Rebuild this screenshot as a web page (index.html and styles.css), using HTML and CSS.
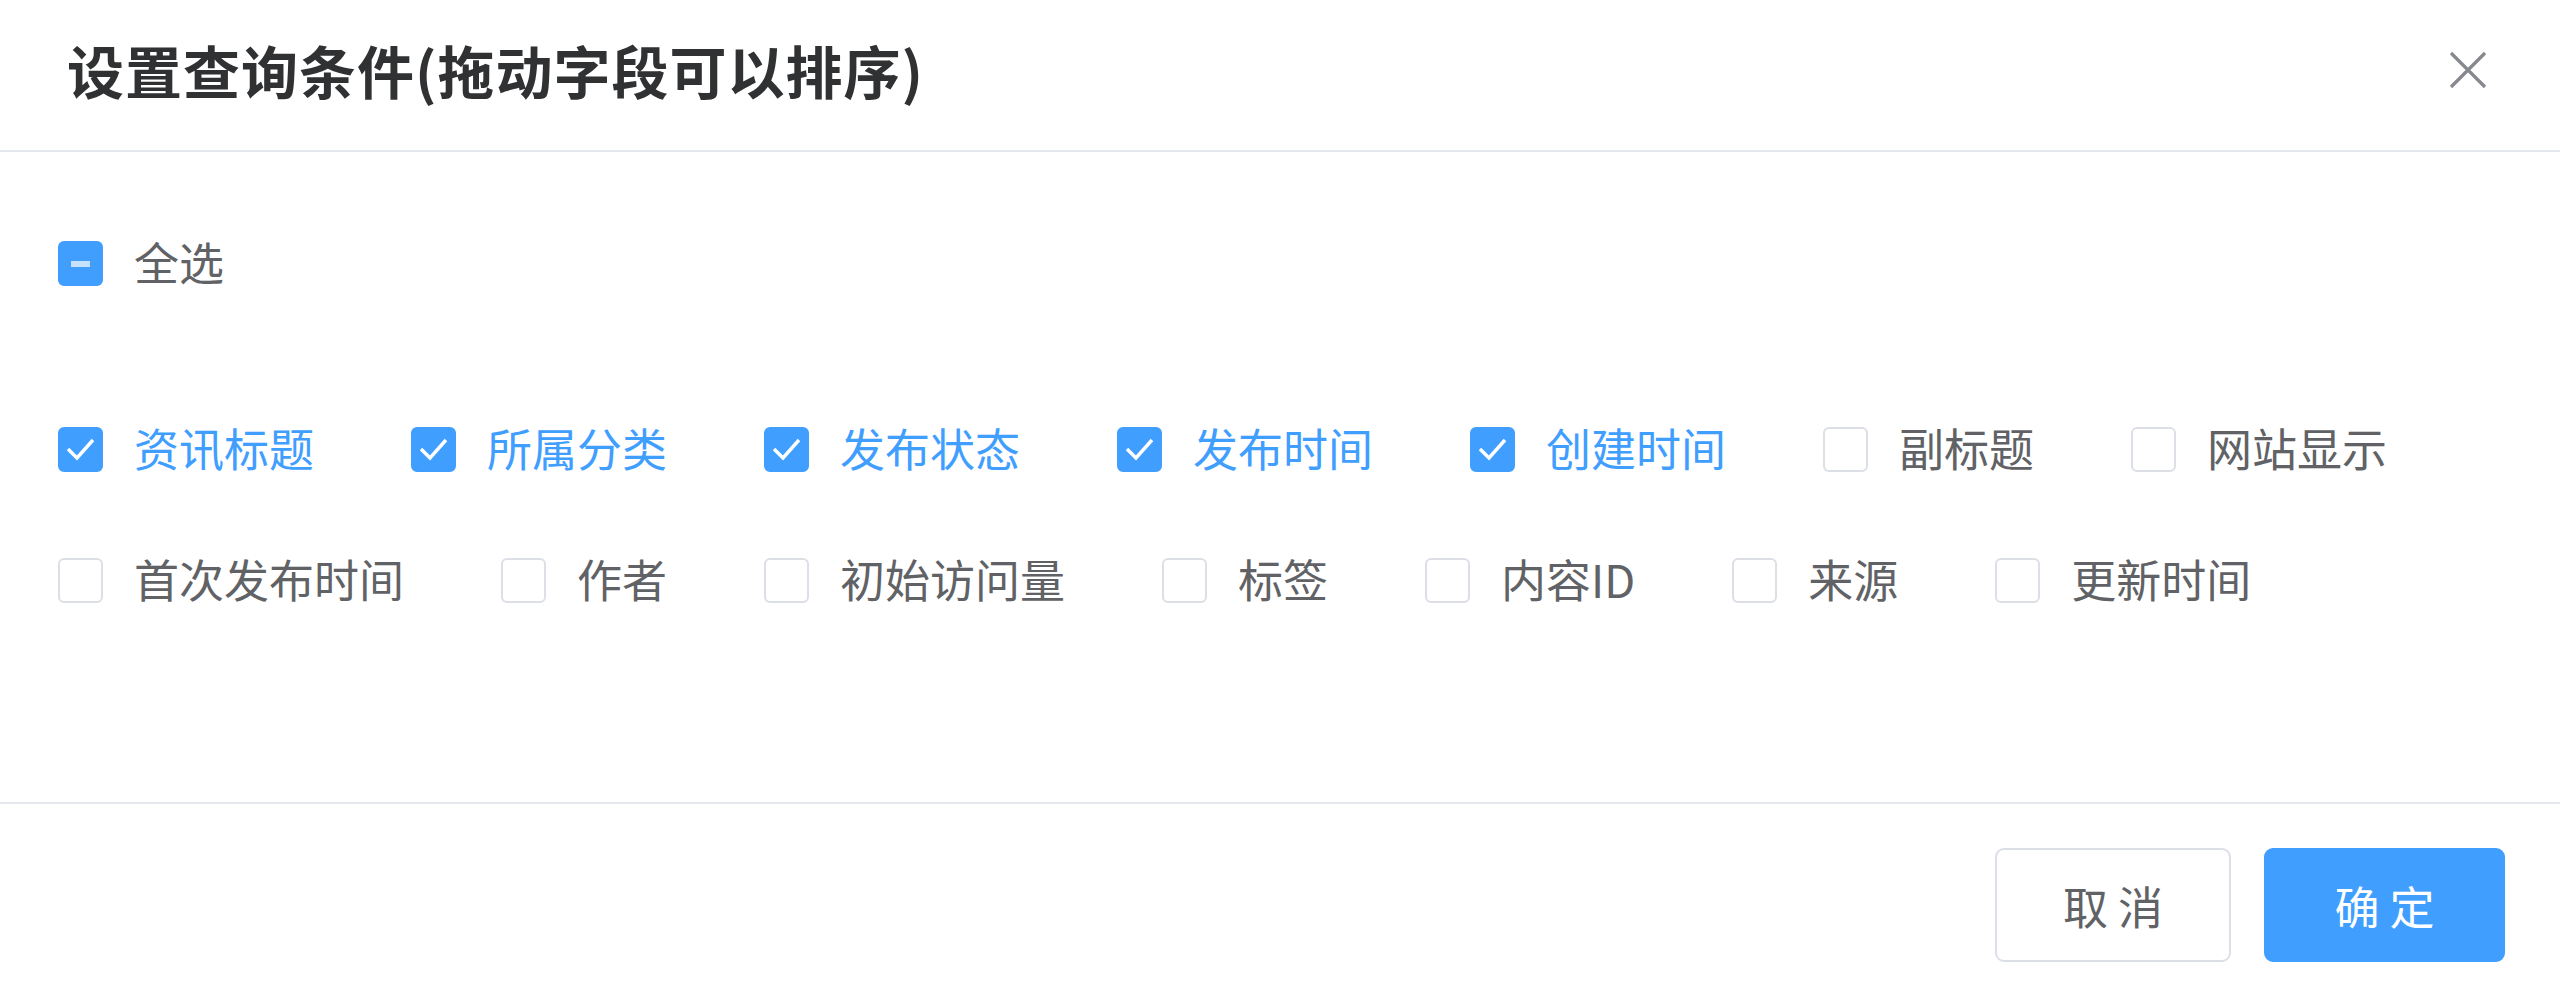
FILE: index.html
```html
<!DOCTYPE html>
<html lang="zh-CN">
<head>
    <meta charset="UTF-8">
    <meta name="viewport" content="width=device-width, initial-scale=1.0">
    <title>设置查询条件</title>
    <link rel="stylesheet" href="styles.css">
</head>
<body>
    <div class="dialog">
        <div class="dialog-header">
            <span class="dialog-title">设置查询条件(拖动字段可以排序)</span>
            <button class="dialog-close" type="button" aria-label="关闭">
                <svg width="38" height="38" viewBox="0 0 38 38"><path d="M2 2 L36 36 M36 2 L2 36" stroke="#85888f" stroke-width="3.2" fill="none"/></svg>
            </button>
        </div>
        <div class="dialog-body">
            <div class="check-all">
                <label class="checkbox">
                    <span class="box checked"><span class="dash"></span></span>
                    <span class="text">全选</span>
                </label>
            </div>
            <div class="check-group">
                <label class="checkbox is-checked">
                    <span class="box checked"><svg width="45" height="45" viewBox="0 0 45 45"><polyline points="10,22 19,31 35,13" stroke="#fff" stroke-width="3.4" fill="none"/></svg></span>
                    <span class="text">资讯标题</span>
                </label>
                <label class="checkbox is-checked">
                    <span class="box checked"><svg width="45" height="45" viewBox="0 0 45 45"><polyline points="10,22 19,31 35,13" stroke="#fff" stroke-width="3.4" fill="none"/></svg></span>
                    <span class="text">所属分类</span>
                </label>
                <label class="checkbox is-checked">
                    <span class="box checked"><svg width="45" height="45" viewBox="0 0 45 45"><polyline points="10,22 19,31 35,13" stroke="#fff" stroke-width="3.4" fill="none"/></svg></span>
                    <span class="text">发布状态</span>
                </label>
                <label class="checkbox is-checked">
                    <span class="box checked"><svg width="45" height="45" viewBox="0 0 45 45"><polyline points="10,22 19,31 35,13" stroke="#fff" stroke-width="3.4" fill="none"/></svg></span>
                    <span class="text">发布时间</span>
                </label>
                <label class="checkbox is-checked">
                    <span class="box checked"><svg width="45" height="45" viewBox="0 0 45 45"><polyline points="10,22 19,31 35,13" stroke="#fff" stroke-width="3.4" fill="none"/></svg></span>
                    <span class="text">创建时间</span>
                </label>
                <label class="checkbox">
                    <span class="box"></span>
                    <span class="text">副标题</span>
                </label>
                <label class="checkbox">
                    <span class="box"></span>
                    <span class="text">网站显示</span>
                </label>
                <label class="checkbox">
                    <span class="box"></span>
                    <span class="text">首次发布时间</span>
                </label>
                <label class="checkbox">
                    <span class="box"></span>
                    <span class="text">作者</span>
                </label>
                <label class="checkbox">
                    <span class="box"></span>
                    <span class="text">初始访问量</span>
                </label>
                <label class="checkbox">
                    <span class="box"></span>
                    <span class="text">标签</span>
                </label>
                <label class="checkbox">
                    <span class="box"></span>
                    <span class="text">内容ID</span>
                </label>
                <label class="checkbox">
                    <span class="box"></span>
                    <span class="text">来源</span>
                </label>
                <label class="checkbox">
                    <span class="box"></span>
                    <span class="text">更新时间</span>
                </label>
            </div>
        </div>
        <div class="dialog-footer">
            <button class="btn" type="button">取 消</button>
            <button class="btn btn-primary" type="button">确 定</button>
        </div>
    </div>
</body>
</html>
```

FILE: styles.css
```css
body {
    margin: 0;
    background-color: #fff;
    font-family: "Noto Sans CJK SC", "Noto Sans", sans-serif;
}
.dialog {
    height: 998px;
    overflow: hidden;
}
.dialog-header {
    display: flex;
    justify-content: space-between;
    align-items: flex-start;
    padding: 33px 73px 45px 67px;
    border-bottom: 2px solid #e4e7ed;
}
.dialog-title {
    font-size: 57px;
    line-height: 72px;
    letter-spacing: 1px;
    font-weight: 700;
    color: #303133;
}
.dialog-close {
    margin-top: 18px;
    padding: 0;
    border: none;
    background: none;
    width: 38px;
    height: 38px;
    cursor: pointer;
}
.dialog-close svg {
    display: block;
}
.dialog-body {
    height: 650px;
    box-sizing: border-box;
    padding: 89px 58px 0;
}
.check-all {
    margin-bottom: 141px;
}
.check-group {
    display: flex;
    flex-wrap: wrap;
    gap: 86px 97px;
}
.checkbox {
    display: inline-flex;
    align-items: center;
    height: 45px;
    cursor: pointer;
}
.box {
    display: inline-flex;
    align-items: center;
    justify-content: center;
    width: 45px;
    height: 45px;
    box-sizing: border-box;
    border: 2px solid #dcdfe6;
    border-radius: 6px;
    background-color: #fff;
}
.box.checked {
    border-color: #409eff;
    background-color: #409eff;
}
.box svg {
    display: block;
    margin: -2px;
}
.dash {
    width: 19px;
    height: 6px;
    background-color: #c6e2ff;
}
.text {
    padding-left: 31px;
    padding-bottom: 5px;
    font-size: 45px;
    line-height: 45px;
    color: #606266;
}
.is-checked .text {
    color: #409eff;
}
.dialog-footer {
    display: flex;
    justify-content: flex-end;
    gap: 33px;
    padding: 44px 55px 0;
    border-top: 2px solid #e4e7ed;
}
.btn {
    width: 236px;
    height: 114px;
    padding: 0;
    border: 2px solid #dcdfe6;
    border-radius: 9px;
    background-color: #fff;
    color: #606266;
    font-family: inherit;
    font-size: 45px;
    cursor: pointer;
}
.btn-primary {
    width: 241px;
    border-color: #409eff;
    background-color: #409eff;
    color: #fff;
}
```
